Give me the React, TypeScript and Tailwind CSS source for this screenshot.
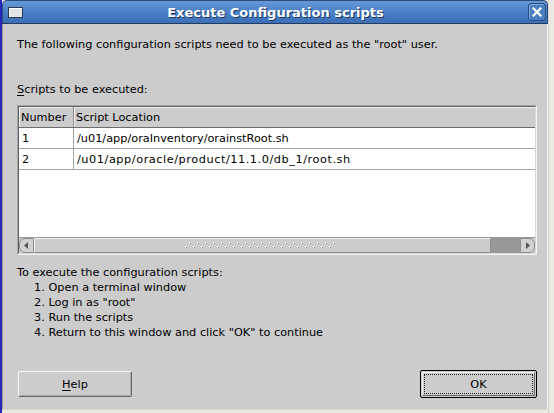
const font = { fontFamily: '"DejaVu Sans", "Liberation Sans", sans-serif' };

const steps = [
  "Open a terminal window",
  'Log in as "root"',
  "Run the scripts",
  'Return to this window and click "OK" to continue',
];

function Grip() {
  const dots = [];
  for (let i = 0; i < 19; i++) {
    dots.push(<rect key={"a" + i} x={4 + i * 8} y={0} width={2} height={2} fill="#f8f8f8" />);
    dots.push(<rect key={"b" + i} x={i * 8} y={4} width={2} height={2} fill="#f8f8f8" />);
    dots.push(<rect key={"c" + i} x={5 + i * 8} y={1} width={1} height={1} fill="#7c7c7c" />);
    dots.push(<rect key={"d" + i} x={1 + i * 8} y={5} width={1} height={1} fill="#7c7c7c" />);
  }
  return (
    <svg width="156" height="7" viewBox="0 0 156 7">
      {dots}
    </svg>
  );
}

export default function App() {
  return (
    <div className="w-[554px] h-[413px] flex bg-[#ece9e2] overflow-hidden text-black" style={font}>
      <div className="w-[2px] h-full bg-[#2626b8]" />

      <div className="w-[546px] h-full flex flex-col">
        {/* title bar */}
        <div className="h-[24px] flex items-center rounded-t-[5px] border border-b-[#213b63] border-[#2c4c7c] bg-linear-to-b from-[#6699d8] via-[#4a80c6] to-[#3c6fb5]">
          <div className="ml-[5px] w-[15px] h-[11px] border border-[#2a3a55] bg-[#e4e4e4] shadow-[inset_1px_1px_0_#ffffff]" />
          <div className="flex-1 text-center text-white font-bold text-[13px] leading-none [text-shadow:1px_1px_0_#1d3a66]">
            Execute Configuration scripts
          </div>
          <div className="mr-[1px] w-[18px] h-[18px] rounded-[3px] border border-[#2a4b7c] bg-[#4b80c4] shadow-[inset_1px_1px_0_#7ea8de] flex items-center justify-center">
            <svg width="10" height="10" viewBox="0 0 10 10">
              <path d="M1.5 1.5 L8.5 8.5 M8.5 1.5 L1.5 8.5" stroke="#ffffff" strokeWidth="2.2" strokeLinecap="square" />
            </svg>
          </div>
        </div>

        {/* body */}
        <div className="h-[385px] bg-[#cccccc] border-l border-r border-l-[#9c9c9c] border-r-[#f2f2f2] pl-[14px] pr-[10px] flex flex-col text-[11.3px] leading-[15px]">
          <div className="mt-[13px]">The following configuration scripts need to be executed as the "root" user.</div>
          <div className="mt-[30px]">
            <span className="underline underline-offset-2">S</span>cripts to be executed:
          </div>

          {/* table */}
          <div className="mt-[8px] h-[150px] border border-t-[#a8a8a8] border-l-[#a8a8a8] border-b-[#f4f4f4] border-r-[#f4f4f4]">
            <div className="h-full flex flex-col bg-white border border-t-[#5e5e5e] border-l-[#5e5e5e] border-b-[#d8d8d8] border-r-[#d8d8d8]">
              <div className="h-[21px] flex bg-[#cccccc] border-b border-[#6e6e6e] shrink-0">
                <div className="w-[55px] pl-[2px] flex items-center border-r border-[#8c8c8c] shadow-[inset_1px_1px_0_#f0f0f0]">Number</div>
                <div className="flex-1 pl-[2px] flex items-center shadow-[inset_1px_1px_0_#f0f0f0]">Script Location</div>
              </div>
              <div className="h-[21px] flex border-b border-[#a6a6a6] shrink-0">
                <div className="w-[55px] pl-[3px] flex items-center border-r border-[#a6a6a6]">1</div>
                <div className="flex-1 pl-[3px] flex items-center">/u01/app/oraInventory/orainstRoot.sh</div>
              </div>
              <div className="h-[21px] flex border-b border-[#a6a6a6] shrink-0">
                <div className="w-[55px] pl-[3px] flex items-center border-r border-[#a6a6a6]">2</div>
                <div className="flex-1 pl-[3px] flex items-center tracking-[0.55px]">/u01/app/oracle/product/11.1.0/db_1/root.sh</div>
              </div>
              <div className="flex-1" />

              {/* horizontal scrollbar */}
              <div className="h-[16px] flex bg-[#cccccc] border-t border-[#9a9a9a] shrink-0">
                <div className="w-[15px] rounded-l-[6px] border border-[#8e8e8e] bg-[#d2d2d2] flex items-center justify-center">
                  <svg width="5" height="7" viewBox="0 0 5 7">
                    <path d="M4 0 L0 3.5 L4 7 Z" fill="#555555" />
                  </svg>
                </div>
                <div className="w-[457px] border border-[#8e8e8e] border-t-[#f0f0f0] border-l-[#f0f0f0] bg-[#cccccc] flex items-center justify-center">
                  <Grip />
                </div>
                <div className="flex-1 bg-[#989898]" />
                <div className="w-[15px] rounded-r-[6px] border border-[#8e8e8e] bg-[#d2d2d2] flex items-center justify-center">
                  <svg width="5" height="7" viewBox="0 0 5 7">
                    <path d="M1 0 L5 3.5 L1 7 Z" fill="#555555" />
                  </svg>
                </div>
              </div>
            </div>
          </div>

          <div className="mt-[10px]">To execute the configuration scripts:</div>
          <ol className="pl-[17px]">
            {steps.map((s, i) => (
              <li key={i}>
                {i + 1}. {s}
              </li>
            ))}
          </ol>

          <div className="mt-auto mb-[11px] flex items-center justify-between">
            <button className="ml-[1px] w-[114px] h-[26px] rounded-[2px] border border-t-[#f4f4f4] border-l-[#f4f4f4] border-b-[#6a6a6a] border-r-[#6a6a6a] bg-[#cccccc] shadow-[inset_-1px_-1px_0_#a8a8a8]">
              <span className="underline underline-offset-2">H</span>elp
            </button>
            <button className="w-[117px] h-[28px] rounded-[2px] border border-black bg-[#cccccc] p-[1px]">
              <div className="h-full border border-t-[#f4f4f4] border-l-[#f4f4f4] border-b-[#6a6a6a] border-r-[#6a6a6a] p-[1px]">
                <div className="h-full border border-dotted border-[#222222] flex items-center justify-center">OK</div>
              </div>
            </button>
          </div>
        </div>

        <div className="flex-1 bg-[#ebe8e1] border-t border-[#d8d5ce]" />
      </div>

      <div className="flex-1 h-full bg-[#ece9e2] border-l border-[#d9d6cf]" />
    </div>
  );
}
